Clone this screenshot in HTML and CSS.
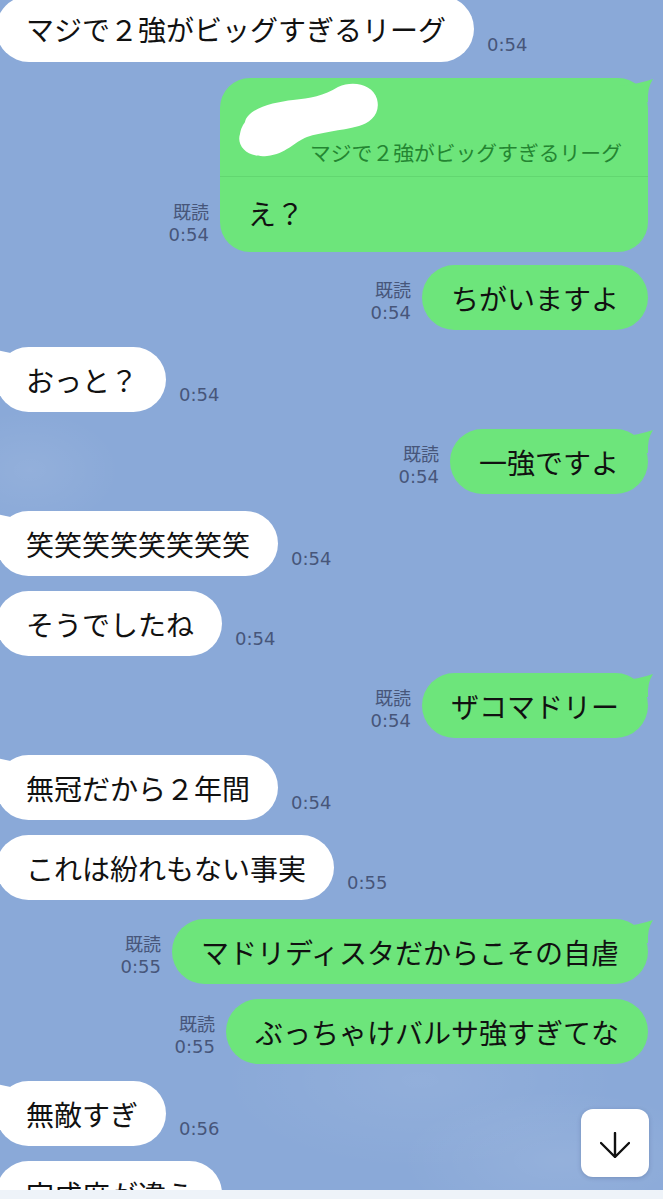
FILE: index.html
```html
<!DOCTYPE html>
<html>
<head>
    <meta charset="utf-8">
    <title>トーク</title>
    <link rel="stylesheet" href="styles.css">
</head>
<body>
    <div class="screen">
        <div class="chat">
            <div class="row in top">
                <div class="bubble">マジで２強がビッグすぎるリーグ</div>
                <div class="time">0:54</div>
            </div>

            <div class="row out reply-row">
                <div class="meta"><span>既読</span><span>0:54</span></div>
                <div class="bubble reply tail">
                    <div class="quote">
                        <svg class="blot" width="170" height="80" viewBox="0 0 170 80">
                            <path d="M25 40 C28 26 55 20 73 18 C90 16 104 14 118 5 C134 -2 153 3 157 17 C161 32 150 41 139 44 C120 49 101 50 87 55 C74 60 66 72 47 74 C28 76 16 64 20 52 C21 46 23 43 25 40 Z" fill="#fff"/>
                        </svg>
                        <span class="quote-text">マジで２強がビッグすぎるリーグ</span>
                    </div>
                    <div class="answer">え？</div>
                </div>
            </div>

            <div class="row out next">
                <div class="meta"><span>既読</span><span>0:54</span></div>
                <div class="bubble">ちがいますよ</div>
            </div>

            <div class="row in first">
                <div class="bubble tail">おっと？</div>
                <div class="time">0:54</div>
            </div>

            <div class="row out first">
                <div class="meta"><span>既読</span><span>0:54</span></div>
                <div class="bubble tail">一強ですよ</div>
            </div>

            <div class="row in first">
                <div class="bubble tail">笑笑笑笑笑笑笑笑</div>
                <div class="time">0:54</div>
            </div>

            <div class="row in next">
                <div class="bubble">そうでしたね</div>
                <div class="time">0:54</div>
            </div>

            <div class="row out first">
                <div class="meta"><span>既読</span><span>0:54</span></div>
                <div class="bubble tail">ザコマドリー</div>
            </div>

            <div class="row in first">
                <div class="bubble tail">無冠だから２年間</div>
                <div class="time">0:54</div>
            </div>

            <div class="row in next">
                <div class="bubble">これは紛れもない事実</div>
                <div class="time">0:55</div>
            </div>

            <div class="row out first wide-gap">
                <div class="meta"><span>既読</span><span>0:55</span></div>
                <div class="bubble tail">マドリディスタだからこその自虐</div>
            </div>

            <div class="row out next">
                <div class="meta"><span>既読</span><span>0:55</span></div>
                <div class="bubble">ぶっちゃけバルサ強すぎてな</div>
            </div>

            <div class="row in first">
                <div class="bubble tail">無敵すぎ</div>
                <div class="time">0:56</div>
            </div>

            <div class="row in next">
                <div class="bubble">完成度が違う</div>
            </div>
        </div>
        <div class="input-bar"></div>

        <button class="scroll-down">
            <svg width="30" height="26" viewBox="0 0 30 26">
                <path d="M15 1 V25 M1 11 L15 25 L29 11" fill="none" stroke="#111" stroke-width="2.4" stroke-linecap="round" stroke-linejoin="round"/>
            </svg>
        </button>
    </div>
</body>
</html>
```

FILE: styles.css
```css
body {
    margin: 0;
    background: #8aa9d8;
    font-family: "Noto Sans CJK JP", sans-serif;
    color: #111;
    overflow: hidden;
}
.screen {
    position: relative;
    width: 663px;
    height: 1199px;
    overflow: hidden;
    background:
        radial-gradient(ellipse 90px 60px at 30px 470px, rgba(255,255,255,0.08), transparent),
        radial-gradient(ellipse 200px 90px at 420px 1080px, rgba(255,255,255,0.07), transparent),
        radial-gradient(ellipse 160px 70px at 560px 1160px, rgba(255,255,255,0.09), transparent),
        #8aa9d8;
}
.chat {
    height: 1190px;
    overflow: hidden;
    display: flex;
    flex-direction: column;
}
.input-bar {
    height: 9px;
    background: #eef3f9;
}

.row {
    display: flex;
    align-items: flex-end;
    flex-shrink: 0;
}
.row.out {
    justify-content: flex-end;
    padding-right: 15px;
}
.row.top { margin-top: -4px; }
.row.reply-row { margin-top: 16px; }
.row.first { margin-top: 17px; }
.row.next { margin-top: 15px; }
.row.reply-row + .row.next { margin-top: 13px; }
.row.wide-gap { margin-top: 19px; }
.row.top .bubble { height: 66px; }

.bubble {
    position: relative;
    height: 65px;
    box-sizing: border-box;
    display: flex;
    align-items: center;
    padding: 0 29px;
    border-radius: 33px;
    font-size: 28px;
    white-space: nowrap;
    background: #6de57b;
}
.row.in .bubble {
    background: #fff;
    margin-left: -4px;
    padding: 0 28px 0 30px;
}

.bubble.tail::after {
    content: "";
    position: absolute;
    top: 0;
    width: 34px;
    height: 24px;
    background: inherit;
}
.row.out .bubble.tail::after {
    right: -5px;
    clip-path: path("M0 8 Q 20 6 34 1 Q 28 10 29 24 L 0 24 Z");
}
.row.in .bubble.tail::after {
    left: -5px;
    clip-path: path("M34 8 Q 14 6 0 1 Q 6 10 5 24 L 34 24 Z");
}

.time {
    margin: 0 0 6px 13px;
    font-family: "DejaVu Sans", "Noto Sans CJK JP", sans-serif;
    font-size: 18px;
    line-height: 22px;
    color: #47567a;
}
.meta {
    display: flex;
    flex-direction: column;
    align-items: flex-end;
    margin: 0 11px 6px 0;
    font-family: "DejaVu Sans", "Noto Sans CJK JP", sans-serif;
    font-size: 18px;
    line-height: 22px;
    color: #47567a;
}

.bubble.reply {
    height: auto;
    width: 428px;
    padding: 0;
    flex-direction: column;
    align-items: stretch;
    border-radius: 30px;
}
.quote {
    position: relative;
    height: 99px;
    box-sizing: border-box;
    padding: 51px 0 0 90px;
    border-bottom: 1px solid #62d770;
}
.quote-text {
    font-size: 20.8px;
    line-height: 28px;
    color: #248532;
}
.blot {
    position: absolute;
    left: 0;
    top: 4px;
}
.answer {
    height: 75px;
    display: flex;
    align-items: center;
    padding: 0 0 3px 28px;
    box-sizing: border-box;
}

.scroll-down {
    position: absolute;
    left: 581px;
    top: 1109px;
    width: 68px;
    height: 68px;
    border: none;
    border-radius: 12px;
    background: #fff;
    box-shadow: 0 1px 4px rgba(40, 60, 100, 0.25);
    display: flex;
    align-items: center;
    justify-content: center;
    padding: 4px 0 0;
}
```
